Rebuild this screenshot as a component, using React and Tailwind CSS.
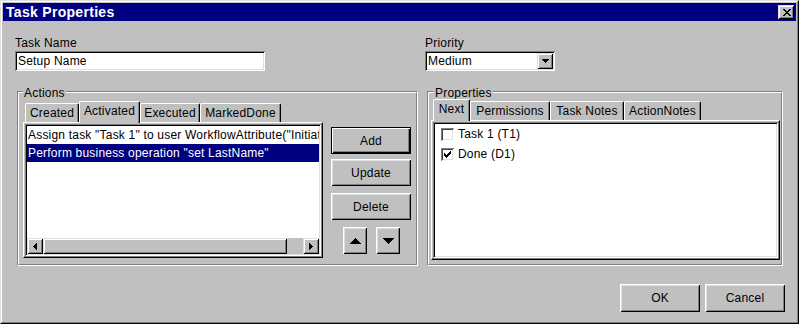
import React from 'react';

const RAISED = 'shadow-[inset_1px_1px_0_#fff,inset_-1px_-1px_0_#000,inset_2px_2px_0_#dfdfdf,inset_-2px_-2px_0_#808080]';
const RAISED_SM = 'shadow-[inset_1px_1px_0_#dfdfdf,inset_-1px_-1px_0_#000,inset_2px_2px_0_#fff,inset_-2px_-2px_0_#808080]';
const SUNKEN = 'shadow-[inset_1px_1px_0_#808080,inset_-1px_-1px_0_#fff,inset_2px_2px_0_#000,inset_-2px_-2px_0_#dfdfdf]';

const ACTION_TABS = [
  { label: 'Created', w: 'w-[54px]' },
  { label: 'Activated', w: 'w-[61px]', active: true },
  { label: 'Executed', w: 'w-[60px]' },
  { label: 'MarkedDone', w: 'w-[81px]' },
];

const PROP_TABS = [
  { label: 'Next', w: 'w-[37px]', active: true },
  { label: 'Permissions', w: 'w-[80px]' },
  { label: 'Task Notes', w: 'w-[74px]' },
  { label: 'ActionNotes', w: 'w-[77px]' },
];

function Glyph({ w, h, d }) {
  return (
    <svg width={w} height={h} viewBox={`0 0 ${w} ${h}`} shapeRendering="crispEdges">
      <path d={d} fill="#000" />
    </svg>
  );
}

const CLOSE_X = 'M0 0h2v1H0z M6 0h2v1H6z M1 1h2v1H1z M5 1h2v1H5z M2 2h4v1H2z M3 3h2v1H3z M2 4h4v1H2z M1 5h2v1H1z M5 5h2v1H5z M0 6h2v1H0z M6 6h2v1H6z';
const DROP = 'M0 0h7v1H0z M1 1h5v1H1z M2 2h3v1H2z M3 3h1v1H3z';
const LEFT = 'M0 3h1v1H0z M1 2h1v3H1z M2 1h1v5H2z M3 0h1v7H3z';
const RIGHT = 'M3 3h1v1H3z M2 2h1v3H2z M1 1h1v5H1z M0 0h1v7H0z';
const UP = 'M5 0h1v1H5z M4 1h3v1H4z M3 2h5v1H3z M2 3h7v1H2z M1 4h9v1H1z M0 5h11v1H0z';
const DOWN = 'M0 0h11v1H0z M1 1h9v1H1z M2 2h7v1H2z M3 3h5v1H3z M4 4h3v1H4z M5 5h1v1H5z';
const CHECK = 'M6 0h1v1H6z M5 1h2v1H5z M0 2h1v1H0z M4 2h3v1H4z M0 3h2v1H0z M3 3h3v1H3z M0 4h5v1H0z M1 5h3v1H1z M2 6h1v1H2z';

function Button({ children, className = '', isDefault }) {
  return (
    <button
      type="button"
      className={`flex items-center justify-center bg-[#c0c0c0] ${
        isDefault
          ? 'border border-black shadow-[inset_1px_1px_0_#fff,inset_-1px_-1px_0_#000,inset_-2px_-2px_0_#808080]'
          : RAISED
      } ${className}`}
    >
      {children}
    </button>
  );
}

function GroupBox({ title, titleLeft, className, children }) {
  return (
    <div className={`relative border border-t-[#808080] border-l-[#808080] border-b-white border-r-white ${className}`}>
      <span className={`absolute -top-[6px] ${titleLeft} px-px bg-[#c0c0c0] leading-[14px]`}>{title}</span>
      <div className="h-full border border-t-white border-l-white border-b-[#808080] border-r-[#808080]">
        {children}
      </div>
    </div>
  );
}

function Tabs({ tabs }) {
  return (
    <div className="relative z-10 flex items-end h-[21px] ml-[2px]">
      {tabs.map((t) => (
        <div
          key={t.label}
          className={`${t.w} flex items-center justify-center bg-[#c0c0c0] border-l border-t border-r border-l-white border-t-white border-r-black rounded-t-[2px] shadow-[inset_-1px_0_0_#808080] ${
            t.active ? 'relative z-10 h-[22px] -mb-px pb-[3px]' : 'h-[19px]'
          }`}
        >
          {t.label}
        </div>
      ))}
    </div>
  );
}

function Panel({ className, children }) {
  return (
    <div className={`border border-t-white border-l-white border-b-black border-r-black shadow-[inset_-1px_-1px_0_#808080] p-px ${className}`}>
      {children}
    </div>
  );
}

function Checkbox({ checked, label }) {
  return (
    <div className="flex items-center h-[20px] pl-[6px] gap-[4px]">
      <div className="w-[13px] h-[13px] bg-white p-[2px] flex items-center justify-center shadow-[inset_1px_1px_0_#808080,inset_-1px_-1px_0_#fff,inset_2px_2px_0_#404040,inset_-2px_-2px_0_#dfdfdf]">
        {checked && <Glyph w={7} h={7} d={CHECK} />}
      </div>
      <span>{label}</span>
    </div>
  );
}

export default function App() {
  return (
    <div className="w-[799px] h-[324px] bg-[#c0c0c0] font-['Liberation_Sans',Arial,sans-serif] text-[12px] leading-[14px] tracking-[0.2px] text-black border border-t-[#dfdfdf] border-l-[#dfdfdf] border-b-black border-r-black">
      <div className="h-full flex flex-col p-px border border-t-white border-l-white border-b-[#808080] border-r-[#808080]">
        {/* title bar */}
        <div className="h-[18px] shrink-0 bg-[#000080] flex items-center justify-between pl-[3px] pr-[2px]">
          <span className="text-white font-bold text-[14px] leading-[18px] tracking-[0.3px]">Task Properties</span>
          <div className={`w-[16px] h-[14px] bg-[#c0c0c0] flex items-center justify-center pl-px ${RAISED_SM}`}>
            <Glyph w={8} h={7} d={CLOSE_X} />
          </div>
        </div>

        <div className="flex-1 flex flex-col">
          {/* name / priority */}
          <div className="flex pt-[15px] pl-[12px]">
            <div className="w-[250px] flex flex-col gap-px">
              <span>Task Name</span>
              <div className={`h-[20px] bg-white pl-[3px] flex items-center ${SUNKEN}`}>Setup Name</div>
            </div>
            <div className="ml-[160px] w-[130px] flex flex-col gap-px">
              <span>Priority</span>
              <div className={`h-[20px] bg-white p-[2px] flex items-center ${SUNKEN}`}>
                <span className="flex-1 pl-px">Medium</span>
                <div className={`w-[16px] h-[16px] bg-[#c0c0c0] flex items-center justify-center ${RAISED_SM}`}>
                  <Glyph w={7} h={4} d={DROP} />
                </div>
              </div>
            </div>
          </div>

          {/* group boxes */}
          <div className="flex mt-[20px] ml-[14px] gap-[9px]">
            <GroupBox title="Actions" titleLeft="left-[5px]" className="w-[401px] h-[175px]">
              <div className="flex pl-[4px] pt-[8px]">
                <div className="w-[300px] flex flex-col">
                  <Tabs tabs={ACTION_TABS} />
                  <Panel className="h-[136px]">
                    <div className={`h-full bg-white p-[2px] flex flex-col ${SUNKEN}`}>
                      <div className="flex-1 overflow-hidden whitespace-nowrap">
                        <div className="h-[18px] leading-[18px] pl-px">Assign task "Task 1" to user WorkflowAttribute("Initiator")</div>
                        <div className="h-[18px] leading-[18px] pl-px bg-[#000080] text-white">Perform business operation "set LastName"</div>
                      </div>
                      <div className="h-[16px] flex bg-[#c0c0c0]">
                        <div className={`w-[16px] h-[16px] flex items-center justify-center ${RAISED_SM}`}>
                          <Glyph w={4} h={7} d={LEFT} />
                        </div>
                        <div className={`w-[244px] h-[16px] ${RAISED_SM}`} />
                        <div className="flex-1" />
                        <div className={`w-[16px] h-[16px] flex items-center justify-center ${RAISED_SM}`}>
                          <Glyph w={4} h={7} d={RIGHT} />
                        </div>
                      </div>
                    </div>
                  </Panel>
                </div>
                <div className="ml-[8px] mt-[26px] w-[80px] flex flex-col">
                  <Button isDefault className="h-[27px]">Add</Button>
                  <Button className="h-[27px] mt-[5px]">Update</Button>
                  <Button className="h-[27px] mt-[7px]">Delete</Button>
                  <div className="flex mt-[7px] ml-[12px] gap-[9px]">
                    <Button className="w-[24px] h-[27px]"><Glyph w={11} h={6} d={UP} /></Button>
                    <Button className="w-[24px] h-[27px]"><Glyph w={11} h={6} d={DOWN} /></Button>
                  </div>
                </div>
              </div>
            </GroupBox>

            <GroupBox title="Properties" titleLeft="left-[6px]" className="w-[356px] h-[175px]">
              <div className="pl-[2px] pt-[6px] w-[351px] flex flex-col">
                <Tabs tabs={PROP_TABS} />
                <Panel className="h-[140px]">
                  <div className={`h-full bg-white p-[2px] ${SUNKEN}`}>
                    <Checkbox label="Task 1 (T1)" />
                    <Checkbox checked label="Done (D1)" />
                  </div>
                </Panel>
              </div>
            </GroupBox>
          </div>

          {/* dialog buttons */}
          <div className="flex justify-end gap-[5px] mt-[18px] pr-[11px]">
            <Button className="w-[80px] h-[28px]">OK</Button>
            <Button className="w-[80px] h-[28px]">Cancel</Button>
          </div>
        </div>
      </div>
    </div>
  );
}
